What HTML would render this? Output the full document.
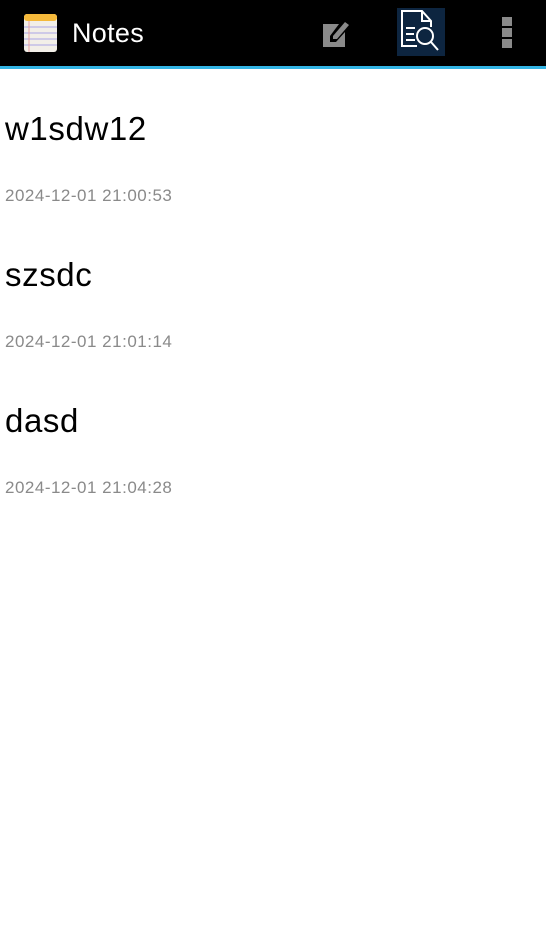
<!DOCTYPE html>
<html><head><style>
body{margin:0;width:546px;height:935px;background:#fff;font-family:"Liberation Sans",sans-serif;position:relative;overflow:hidden}
.bar{position:absolute;left:0;top:0;width:546px;height:66px;background:#000}
.line{position:absolute;left:0;top:66px;width:546px;height:3px;background:#33b5e5}
.t{position:absolute;left:5px;font-size:33px;letter-spacing:0.6px;color:#000}
.d{position:absolute;left:5px;font-size:17px;letter-spacing:0.5px;color:#8a8a8a}
</style></head><body>
<div class="bar">
<svg style="position:absolute;left:24px;top:14px" width="33" height="38" viewBox="0 0 33 38">
<rect x="0" y="0" width="33" height="38" rx="3" fill="#f2efe8"/>
<rect x="0" y="0" width="33" height="7" rx="3" fill="#f5b93a"/>
<g stroke="#a9a6e6" stroke-width="1"><line x1="0" y1="13" x2="33" y2="13"/><line x1="0" y1="19" x2="33" y2="19"/><line x1="0" y1="25" x2="33" y2="25"/><line x1="0" y1="31" x2="33" y2="31"/></g>
<line x1="5" y1="7" x2="5" y2="38" stroke="#e9a0a0"/>
</svg>
<div style="position:absolute;left:72px;top:18px;font-size:27px;letter-spacing:0.3px;color:#fff">Notes</div>
<svg style="position:absolute;left:319px;top:20px" width="32" height="27" viewBox="0 0 32 27">
<path d="M4 4h16l-9 12v6h6l9-10v15H4z" fill="#8a8a8a"/>
<path d="M14 16l12-14 4 3-12 14h-4z" fill="#8a8a8a"/>
</svg>
<svg style="position:absolute;left:397px;top:8px" width="48" height="48" viewBox="0 0 48 48">
<rect width="48" height="48" fill="#0d2540"/>
<path d="M20 38H5V3h20l9 10v6" fill="none" stroke="#fff" stroke-width="2"/>
<path d="M25 3v10h9" fill="none" stroke="#fff" stroke-width="2"/>
<g stroke="#fff" stroke-width="2"><line x1="9" y1="20" x2="18" y2="20"/><line x1="9" y1="26" x2="17" y2="26"/><line x1="9" y1="32" x2="18" y2="32"/></g>
<circle cx="28" cy="28" r="8" fill="none" stroke="#fff" stroke-width="2"/>
<line x1="34" y1="34" x2="41" y2="42" stroke="#fff" stroke-width="2"/>
</svg>
<div style="position:absolute;left:502px;top:17px;width:10px;height:9px;background:#8a8a8a"></div>
<div style="position:absolute;left:502px;top:28px;width:10px;height:9px;background:#8a8a8a"></div>
<div style="position:absolute;left:502px;top:39px;width:10px;height:9px;background:#8a8a8a"></div>
</div>
<div class="line"></div>
<div class="t" style="top:110px">w1sdw12</div>
<div class="d" style="top:186px">2024-12-01 21:00:53</div>
<div class="t" style="top:256px">szsdc</div>
<div class="d" style="top:332px">2024-12-01 21:01:14</div>
<div class="t" style="top:402px">dasd</div>
<div class="d" style="top:478px">2024-12-01 21:04:28</div>
</body></html>
